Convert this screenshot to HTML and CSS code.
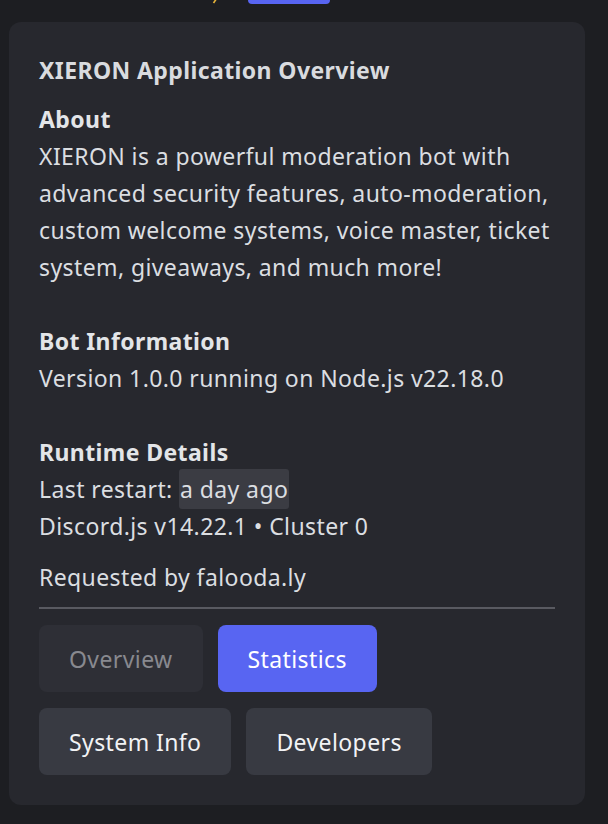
FILE: index.html
```html
<!DOCTYPE html>
<html>
<head>
<meta charset="utf-8">
<link rel="stylesheet" href="styles.css">
</head>
<body>
<div class="prev">
  <svg class="spark" width="8" height="6" viewBox="0 0 8 6"><path d="M1.5 5 L5 0" stroke="#e8b53a" stroke-width="1.6" fill="none"/></svg>
  <div class="prev-btn"></div>
</div>
<div class="card">
  <div class="title">XIERON Application Overview</div>
  <div class="body">
    <div class="h">About</div>
    <div>XIERON is a powerful moderation bot with advanced security features, auto-moderation, custom welcome systems, voice master, ticket system, giveaways, and much more!</div>
    <div class="blank"></div>
    <div class="h">Bot Information</div>
    <div>Version 1.0.0 running on Node.js v22.18.0</div>
    <div class="blank"></div>
    <div class="h">Runtime Details</div>
    <div>Last restart: <span class="ts">a day ago</span></div>
    <div>Discord.js v14.22.1 • Cluster 0</div>
  </div>
  <div class="footer">Requested by falooda.ly</div>
  <div class="divider"></div>
  <div class="row">
    <div class="btn disabled">Overview</div>
    <div class="btn primary">Statistics</div>
  </div>
  <div class="row">
    <div class="btn">System Info</div>
    <div class="btn">Developers</div>
  </div>
</div>
</body>
</html>
```
FILE: styles.css
```css
html, body {
  margin: 0;
  padding: 0;
  background: #1d1e22;
  font-family: "Noto Sans", "Open Sans", sans-serif;
  color: #dbdee1;
  letter-spacing: 0.4px;
}
.prev {
  height: 22px;
  display: flex;
  align-items: flex-start;
}
.spark {
  margin-left: 212px;
  margin-top: -2px;
}
.prev-btn {
  margin-left: 28px;
  width: 82px;
  height: 4px;
  background: #5865f2;
  border-radius: 0 0 6px 6px;
}
.card {
  margin-left: 9px;
  width: 576px;
  box-sizing: border-box;
  background: #27282e;
  border-radius: 12px;
  padding: 33px 30px 30px 30px;
}
.title {
  font-size: 23px;
  font-weight: 700;
  line-height: 30px;
  margin-bottom: 16px;
  color: #d9dbdf;
}
.body {
  font-size: 23px;
  line-height: 37px;
}
.h {
  font-weight: 700;
  color: #e3e5e8;
}
.blank {
  height: 37px;
}
.ts {
  background: #3b3c43;
  padding: 4px 1px;
  border-radius: 3px;
}
.footer {
  font-size: 23px;
  line-height: 30px;
  margin-top: 17px;
}
.divider {
  height: 2px;
  background: #595a61;
  margin: 15px 0 16px 0;
  width: 516px;
}
.row {
  display: flex;
  gap: 15px;
  margin-bottom: 16px;
}
.row:last-child {
  margin-bottom: 0;
}
.btn {
  height: 67px;
  padding: 0 30px;
  border-radius: 8px;
  background: #383a42;
  color: #f2f3f5;
  font-size: 23px;
  display: flex;
  align-items: center;
}
.btn.disabled {
  background: #2e2f36;
  color: #88898f;
}
.btn.primary {
  background: #5865f2;
  color: #ffffff;
}
```
